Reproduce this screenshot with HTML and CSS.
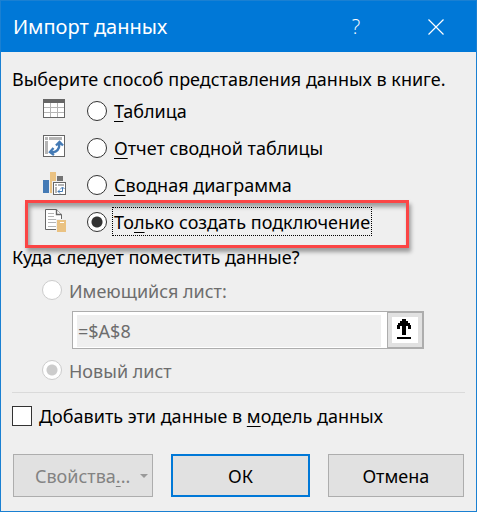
FILE: index.html
```html
<!DOCTYPE html>
<html lang="ru">
<head>
  <meta charset="UTF-8" />
  <meta name="viewport" content="width=device-width, initial-scale=1.0"/>
  <title>Импорт данных</title>
  <link rel="stylesheet" href="styles.css">
</head>
<body>

<form class="dialog" onsubmit="return false">
  <header class="titlebar">
    <h1>Импорт данных</h1>
    <button type="button" class="title-btn" aria-label="Справка">?</button>
    <button type="button" class="title-btn" aria-label="Закрыть">
      <svg width="16" height="16" viewBox="0 0 16 16"><path d="M.5 .5l15 15M15.5 .5l-15 15" stroke="#fff" stroke-width="1.2"/></svg>
    </button>
  </header>

  <main class="content">
    <fieldset class="group">
      <legend>Выберите способ представления данных в книге.</legend>

      <div class="option">
        <!-- Table -->
        <svg class="icon" width="24" height="24" viewBox="0 0 24 24" shape-rendering="crispEdges">
          <rect x="0" y="2" width="22" height="19" fill="#666"/>
          <path fill="#fff" d="M1 6h20v14H1z"/>
          <path fill="#b5b5b5" d="M7 6h1v14H7zM14 6h1v14h-1zM1 10h20v1H1zM1 15h20v1H1z"/>
        </svg>
        <input type="radio" name="view" id="view-table">
        <label for="view-table"><u>Т</u>аблица</label>
      </div>

      <div class="option">
        <!-- Pivot table -->
        <svg class="icon" width="24" height="24" viewBox="0 0 24 24">
          <rect x=".5" y="1.5" width="21" height="21" fill="#fff" stroke="#666"/>
          <path fill="#b5b5b5" d="M2 3h3v3H2zM6 3h13v3H6zM2 7h3v13H2z"/>
          <path fill="none" stroke="#447ab5" stroke-width="2.400" d="M8 18c6 1 8.500-3 8.500-9M13 11.500L16.500 8l3.500 3.500M10.500 14L7 18l4 3"/>
        </svg>
        <input type="radio" name="view" id="view-pivot">
        <label for="view-pivot"><u>О</u>тчет сводной таблицы</label>
      </div>

      <div class="option">
        <!-- Pivot chart -->
        <svg class="icon" width="24" height="24" viewBox="0 0 24 24">
          <path fill="#447ab5" d="M0 9h6v13H0z"/>
          <path fill="#eac282" d="M7 1h6v21H7z"/>
          <path fill="#737373" d="M14 5h6v5h-6z"/>
          <path fill="#efefef" d="M9 10h15v14H9z"/>
          <rect x="10.500" y="11.500" width="12" height="12" fill="#fff" stroke="#666"/>
          <path fill="#b5b5b5" d="M12 13h2v2h-2zM15 13h6v2h-6zM12 16h2v6h-2z"/>
          <path fill="none" stroke="#447ab5" d="M15 20.500h4.500v-4M17.500 18l2-2 2 2M17 18.500l-2 2 2 2"/>
        </svg>
        <input type="radio" name="view" id="view-chart">
        <label for="view-chart"><u>С</u>водная диаграмма</label>
      </div>

      <div class="option marked">
        <!-- Connection only -->
        <svg class="icon" width="24" height="24" viewBox="0 0 24 24">
          <path fill="#fff" stroke="#666" d="M2.500 1.500h11l5 5v15h-16z"/>
          <path fill="#fff" stroke="#666" stroke-width="1.400" d="M13.500 1.500v5h5"/>
          <path fill="#b5b5b5" d="M5 5h6v1H5zM5 8h6v1H5zM5 11h11v1H5zM5 14h8v1H5zM5 18h8v1H5z"/>
          <path fill="#efefef" d="M13 11h10v12H13z"/>
          <path fill="#eac282" d="M14 12h9v12h-9z"/>
          <path fill="#fff" d="M17 14h4v1h-4z"/>
        </svg>
        <input type="radio" name="view" id="view-connection" checked>
        <label for="view-connection" class="focused">То<u>л</u>ько создать подключение</label>
      </div>
    </fieldset>

    <fieldset class="group target" disabled>
      <legend>Куда следует поместить данные?</legend>
      <div class="place">
        <input type="radio" name="place" id="place-existing">
        <label for="place-existing">Имеющийся лист:</label>
      </div>
      <div class="range">
        <input type="text" class="range-text" value="=$A$8" aria-label="Имеющийся лист">
        <button type="button" class="range-btn" aria-label="Выбрать диапазон">
          <svg width="26" height="26" viewBox="0 0 26 26" shape-rendering="crispEdges">
            <path fill="#fff" d="M0 0h26v26H0z"/>
            <path d="M10 2h4v2h2v2h2v2h1v4h-3V9h-2v9h-4V9H8v3H5V8h1V6h2V4h2zM5 20h14v2H5z"/>
          </svg>
        </button>
      </div>
      <div class="place">
        <input type="radio" name="place" id="place-new" checked>
        <label for="place-new">Новый лист</label>
      </div>
    </fieldset>

    <hr>

    <div class="model">
      <input type="checkbox" id="model">
      <label for="model">Добавить эти данные в <u>м</u>одель данных</label>
    </div>

    <div class="buttons">
      <button type="button" class="btn props" disabled>
        <span>Свойства<u>.</u>..</span>
        <svg width="8" height="4" viewBox="0 0 8 4"><path fill="#999" d="M0 0h8L4 4z"/></svg>
      </button>
      <button type="submit" class="btn primary">ОК</button>
      <button type="button" class="btn">Отмена</button>
    </div>
  </main>
</form>

</body>
</html>
```

FILE: styles.css
```css
* {
  box-sizing: border-box;
}

body {
  margin: 0;
  background: #efefef;
  color: #000;
  font-family: 'Segoe UI', 'Noto Sans', 'Open Sans', sans-serif;
  font-size: 18px;
  line-height: 26px;
}

button,
input {
  font: inherit;
  margin: 0;
}

.dialog {
  min-height: 100vh;
  border: 1px solid #1a80d2;
  background: #efefef;
}

/* Title bar */
.titlebar {
  display: flex;
  align-items: center;
  height: 51px;
  padding: 0 0 0 12px;
  background: #0078d7;
  color: #fff;
}

.titlebar h1 {
  flex: 1;
  margin: 0;
  font-size: 20px;
  font-weight: normal;
}

.title-btn {
  display: flex;
  align-items: center;
  justify-content: center;
  width: 80px;
  height: 100%;
  padding: 0;
  border: none;
  background: none;
  color: #fff;
  font-family: 'Segoe UI', 'Open Sans', sans-serif;
  font-size: 20px;
  font-weight: 300;
}

.content {
  padding: 14px 11px 13px;
}

/* Option groups */
.group {
  margin: 0;
  padding: 0;
  border: none;
}

.group legend {
  padding: 0;
}

.option {
  position: relative;
  display: flex;
  align-items: center;
  height: 37px;
  padding-left: 31px;
}

.icon {
  margin-right: 20px;
  margin-bottom: 4px;
}

label {
  padding: 1px 1px 0;
  border: 1px solid transparent;
}

u {
  text-decoration-thickness: 1px;
  text-underline-offset: 3px;
}

.option label {
  margin-left: 5px;
}

label.focused {
  border: 1px dotted #000;
}

/* Red frame drawn over the selected row */
.marked::after {
  content: "";
  position: absolute;
  top: -3px;
  bottom: -8px;
  left: 13px;
  right: 56px;
  border: 3px solid #fb4545;
  box-shadow: 2px 4px 4px rgba(0,0,0,0.35), inset 2px 4px 4px rgba(0,0,0,0.35);
  pointer-events: none;
}

input[type="radio"] {
  appearance: none;
  flex: none;
  width: 20px;
  height: 20px;
  border: 1px solid #333;
  border-radius: 50%;
  background: #fff;
}

input[type="radio"]:checked {
  background: radial-gradient(circle, #333 5px, #fff 6px);
}

input[type="radio"]:disabled {
  border-color: #ccc;
}

input[type="radio"]:disabled:checked {
  background: radial-gradient(circle, #ccc 5px, #fff 6px);
}

/* Target sheet */
.target {
  margin-top: 4px;
  padding: 1px 0 3px;
}

.place {
  display: flex;
  align-items: center;
  height: 38px;
  padding-left: 30px;
  color: #6d6d6d;
}

.place label {
  margin-left: 5px;
}

.range {
  display: flex;
  height: 38px;
  margin: 2px 41px 2px 60px;
  border: 1px solid #adadad;
  background: #fff;
}

.range-text {
  flex: 1;
  min-width: 0;
  margin: 3px 6px 1px 4px;
  padding: 0 1px;
  border: none;
  background: #efefef;
  color: #6d6d6d;
}

.range-btn {
  display: flex;
  align-items: center;
  justify-content: center;
  width: 36px;
  padding: 0;
  border: 1px solid #adadad;
  background: #e1e1e1;
}

hr {
  height: 1px;
  margin: 0;
  border: none;
  background: #dadada;
}

.model {
  display: flex;
  align-items: center;
  height: 45px;
}

.model label {
  margin-left: 5px;
}

input[type="checkbox"] {
  appearance: none;
  flex: none;
  width: 20px;
  height: 20px;
  border: 1px solid #333;
  background: #fff;
}

/* Bottom buttons */
.buttons {
  display: flex;
  gap: 18px;
  padding: 16px 1px 0;
}

.btn {
  flex: 1;
  height: 43px;
  padding: 0;
  border: 1px solid #adadad;
  background: #e1e1e1;
  color: #000;
}

.btn.primary {
  border: 2px solid #0078d7;
}

.btn.props {
  display: flex;
  align-items: center;
  justify-content: flex-end;
  gap: 10px;
  padding-right: 4px;
  color: #838383;
}
```
